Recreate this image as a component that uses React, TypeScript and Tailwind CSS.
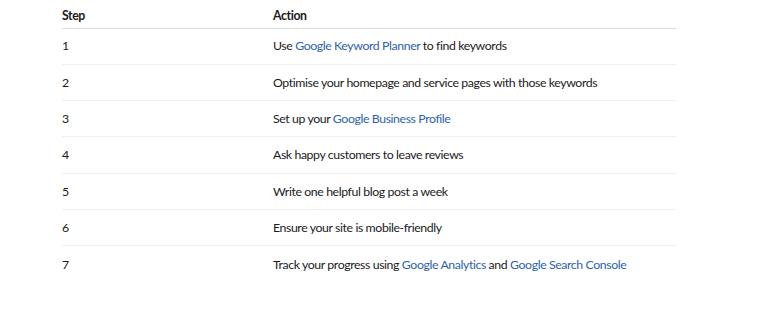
const rows: { step: number; action: React.ReactNode }[] = [
  { step: 1, action: <>Use <A>Google Keyword Planner</A> to find keywords</> },
  { step: 2, action: <>Optimise your homepage and service pages with those keywords</> },
  { step: 3, action: <>Set up your <A>Google Business Profile</A></> },
  { step: 4, action: <>Ask happy customers to leave reviews</> },
  { step: 5, action: <>Write one helpful blog post a week</> },
  { step: 6, action: <>Ensure your site is mobile-friendly</> },
  { step: 7, action: <>Track your progress using <A>Google Analytics</A> and <A>Google Search Console</A></> },
]

function A({ children }: { children: React.ReactNode }) {
  return <a href="#" className="text-[#2d62ae] no-underline">{children}</a>
}

export default function App() {
  return (
    <div className="min-h-[314px] bg-white pl-[62px] font-['Lato',sans-serif] text-[12.3px] tracking-[-0.4px] text-[#1b1b1b]">
      <table className="w-[614px] border-collapse text-left">
        <thead>
          <tr className="border-b border-[#dcdcdc]">
            <th className="h-[28px] w-[211px] pt-[4px] font-bold">Step</th>
            <th className="h-[28px] pt-[4px] font-bold">Action</th>
          </tr>
        </thead>
        <tbody>
          {rows.map((r) => (
            <tr key={r.step} className="border-b border-[#f0f0f0] last:border-b-0">
              <td className="h-[36.33px] pt-[1px] font-normal">{r.step}</td>
              <td className="h-[36.33px] pt-[1px]">{r.action}</td>
            </tr>
          ))}
        </tbody>
      </table>
    </div>
  )
}
